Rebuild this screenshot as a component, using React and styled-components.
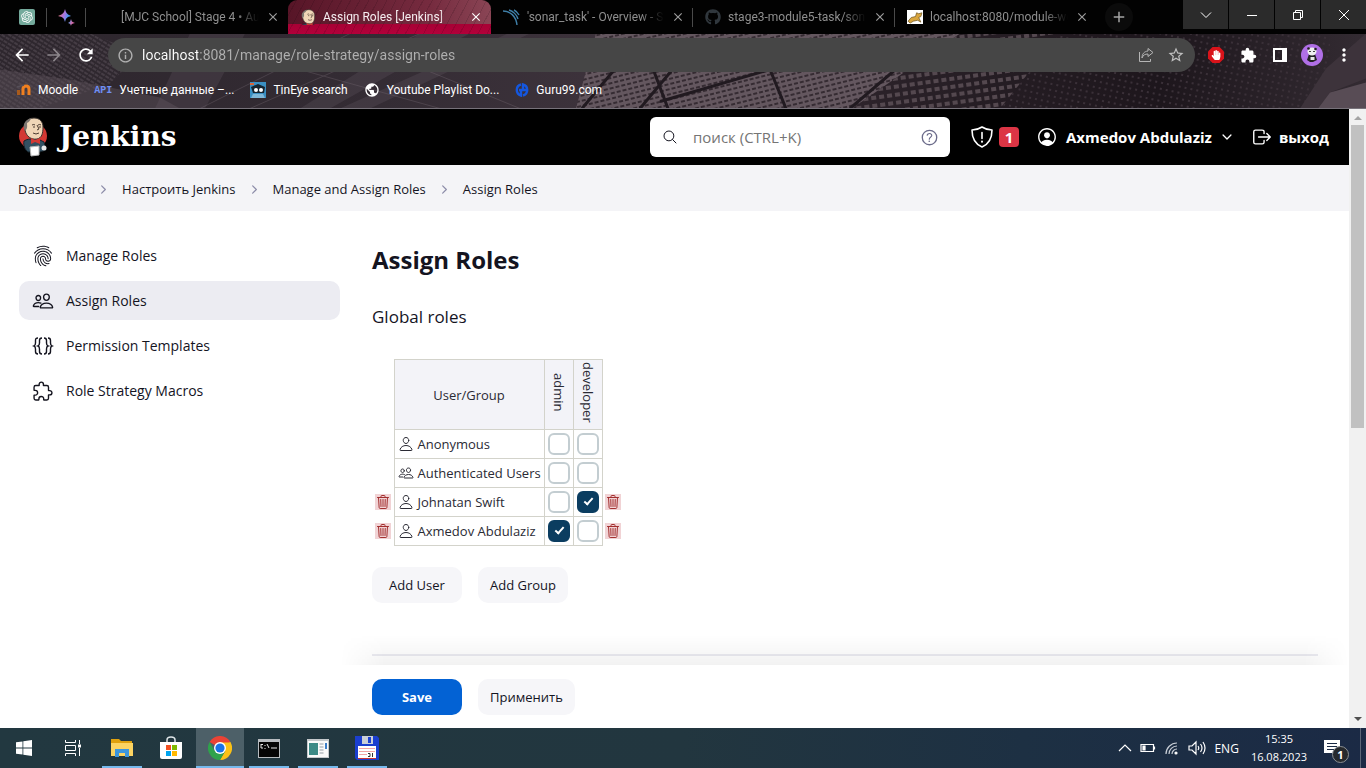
import React from "react";
import styled, { createGlobalStyle, css } from "styled-components";
import {
  IoFingerPrintOutline,
  IoPeopleOutline,
  IoPersonOutline,
  IoTrashOutline,
  IoExtensionPuzzleOutline,
  IoSearchOutline,
  IoHelpCircleOutline,
  IoPersonCircleOutline,
  IoLogOutOutline,
  IoChevronDown,
  IoChevronForward,
} from "react-icons/io5";
import {
  MdArrowBack,
  MdArrowForward,
  MdRefresh,
  MdExtension,
  MdMoreVert,
  MdStarOutline,
  MdClose,
  MdAdd,
  MdInfoOutline,
  MdPublic,
} from "react-icons/md";
import { FaGithub, FaHandPaper } from "react-icons/fa";
import { RiOpenaiFill } from "react-icons/ri";

const GlobalStyle = createGlobalStyle`
  *, *::before, *::after { box-sizing: border-box; }
  body {
    margin: 0;
    color: #14141f;
    background: #fff;
    font-family: "Open Sans", "Noto Sans", sans-serif;
    font-size: 13px;
  }
  button, input { font: inherit; color: inherit; }
  button { border: 0; padding: 0; background: none; cursor: pointer; }
  a { color: inherit; text-decoration: none; }
  svg { display: block; flex: none; }
`;

const Desktop = styled.div`
  display: flex;
  flex-direction: column;
  height: 100vh;
  overflow: hidden;
`;

/* ---------- browser frame ---------- */

const frameFont = css`
  font-family: Roboto, "Open Sans", sans-serif;
`;

const TabStrip = styled.div`
  ${frameFont}
  display: flex;
  height: 34px;
  padding-left: 8px;
  background: #020202;
  flex: none;
`;

const Tab = styled.div`
  position: relative;
  display: flex;
  align-items: center;
  gap: 7px;
  flex: 0 1 202px;
  min-width: 0;
  padding: 0 8px 0 12px;
  border-radius: 9px 9px 0 0;
  color: #8f8f8f;
  font-size: 12px;
  ${(p) =>
    p.$pinned &&
    css`
      flex: 0 0 39px;
      padding: 0 11px;
    `}
  ${(p) =>
    p.$active &&
    css`
      flex-basis: 203px;
      color: #f5eef0;
      background:
        repeating-linear-gradient(118deg, transparent 0 7px, rgba(20, 0, 10, 0.14) 7px 8px),
        linear-gradient(90deg, #571527, #762b3f 70%, #8a4555) 0 0 / 100% 24px no-repeat,
        linear-gradient(#8a0428, #b3003a);
    `}
  ${(p) =>
    p.$divider &&
    css`
      &::after {
        content: "";
        position: absolute;
        right: 0;
        top: 8px;
        width: 1px;
        height: 19px;
        background: #4a4a4a;
      }
    `}
`;

const TabTitle = styled.span`
  flex: 1;
  min-width: 0;
  overflow: hidden;
  white-space: nowrap;
  mask-image: linear-gradient(90deg, #000 calc(100% - 24px), transparent);
`;

const TabClose = styled.button`
  display: flex;
  color: ${(p) => (p.$active ? "#fff" : "#9d9d9d")};
`;

const NewTab = styled.button`
  display: flex;
  align-items: center;
  justify-content: center;
  width: 28px;
  height: 28px;
  margin: 3px 0 0 8px;
  border-radius: 50%;
  color: #a5a5a5;
  background: #0b0b0b;
`;

const WindowButtons = styled.div`
  display: flex;
  gap: 1px;
  margin-left: auto;
`;

const WindowButton = styled.button`
  display: flex;
  align-items: center;
  justify-content: center;
  width: 45px;
  height: 29px;
  color: #fff;
  background: #2b2b2b;
`;

const ChromeBars = styled.div`
  ${frameFont}
  position: relative;
  isolation: isolate;
  flex: none;
  height: 75px;
  border-bottom: 1px solid #77727a;
  background: #282026;
`;

const Artwork = styled.svg`
  position: absolute;
  inset: 0;
  width: 100%;
  height: 100%;
  z-index: -1;
`;

const Toolbar = styled.div`
  display: flex;
  align-items: center;
  gap: 10px;
  padding: 4px 11px 0;
  color: #fff;
`;

const ToolButton = styled.button`
  display: flex;
  align-items: center;
  justify-content: center;
  width: 22px;
  height: 24px;
  color: ${(p) => (p.$dim ? "#8b858a" : "#fff")};
`;

const AddressBox = styled.div`
  display: flex;
  align-items: center;
  gap: 8px;
  flex: 1;
  height: 34px;
  padding: 0 8px 0 9px;
  margin-left: 1px;
  border-radius: 17px;
  color: #b0b0b0;
  background: #464646;
`;

const AddressInput = styled.input`
  flex: 1;
  min-width: 0;
  border: 0;
  padding: 0;
  outline: 0;
  font-size: 14px;
  color: transparent;
  background: linear-gradient(90deg, #fff 56px, #b0b0b0 56px);
  background-clip: text;
`;

const ToolbarEnd = styled.div`
  display: flex;
  align-items: center;
  gap: 10px;
`;

const Bookmarks = styled.nav`
  display: flex;
  align-items: center;
  gap: 16px;
  padding: 8px 16px 0;
  color: #fff;
  font-size: 12px;
`;

const Bookmark = styled.a`
  display: flex;
  align-items: center;
  gap: 7px;
  height: 20px;
  white-space: nowrap;
`;

/* ---------- Jenkins page ---------- */

const Viewport = styled.div`
  display: flex;
  flex: 1;
  min-height: 0;
`;

const Page = styled.div`
  display: flex;
  flex-direction: column;
  flex: 1;
  min-width: 0;
`;

const Scrollbar = styled.div`
  display: flex;
  flex-direction: column;
  align-items: center;
  justify-content: space-between;
  width: 17px;
  padding: 7px 0;
  background: #f1f1f1;
`;

const ScrollThumb = styled.div`
  flex: 0 0 50%;
  width: 13px;
  margin-top: 5px;
  margin-bottom: auto;
  background: #c1c1c1;
`;

const Header = styled.header`
  display: flex;
  align-items: center;
  flex: none;
  height: 56px;
  padding: 0 20px 0 18px;
  color: #fff;
  background: #000;
`;

const Brand = styled.a`
  display: flex;
  align-items: center;
  gap: 11px;
  margin-right: auto;
  font-family: "DejaVu Serif", serif;
  font-weight: 700;
  font-size: 28px;
  line-height: 36px;
`;

const SearchBox = styled.div`
  display: flex;
  align-items: center;
  gap: 15px;
  flex: 0 1 300px;
  height: 40px;
  padding: 0 10px 0 12px;
  border-radius: 6px;
  color: #14141f;
  background: #fff;
`;

const SearchInput = styled.input`
  flex: 1;
  min-width: 0;
  border: 0;
  padding: 0;
  outline: 0;
  font-size: 15px;
  background: none;
  &::placeholder { color: #757575; opacity: 1; }
`;

const HelpLink = styled.a`
  display: flex;
  color: #6b6b8a;
`;

const HeaderLink = styled.a`
  display: flex;
  align-items: center;
  gap: ${(p) => p.$inner || 6}px;
  margin-left: ${(p) => p.$gap}px;
  font-size: 15px;
  font-weight: 700;
  white-space: nowrap;
`;

const AlertCount = styled.span`
  display: flex;
  align-items: center;
  justify-content: center;
  width: 20px;
  height: 20px;
  border-radius: 4px;
  background: #dc3545;
`;

const Breadcrumbs = styled.nav`
  display: flex;
  align-items: center;
  gap: 12px;
  flex: none;
  height: 46px;
  padding: 2px 18px 0;
  background: #f4f4f7;
  white-space: nowrap;
  svg { color: #8b8ba8; }
`;

const Columns = styled.div`
  display: flex;
  flex: 1;
  min-height: 0;
`;

const Sidebar = styled.nav`
  display: flex;
  flex-direction: column;
  gap: 6px;
  flex: 0 0 340px;
  padding: 25px 0 0 19px;
`;

const SidebarLink = styled.a`
  display: flex;
  align-items: center;
  gap: 12px;
  height: 39px;
  padding: 0 13px;
  border-radius: 10px;
  font-size: 14px;
  background: ${(p) => (p.$active ? "#ececf2" : "transparent")};
`;

const Main = styled.main`
  display: flex;
  flex-direction: column;
  flex: 1;
  min-width: 0;
`;

const Content = styled.div`
  flex: 1;
  min-height: 0;
  overflow: hidden;
  padding: 33px 31px 0 32px;
`;

const Title = styled.h1`
  margin: 0;
  font-size: 24px;
  line-height: 32px;
  font-weight: 700;
`;

const Subtitle = styled.h2`
  margin: 28px 0 30px;
  font-size: 17px;
  line-height: 25px;
  font-weight: 400;
`;

const RoleTable = styled.table`
  border-collapse: collapse;
  color: #2a2a34;
  font-size: 13px;
`;

const cell = css`
  height: 29px;
  padding: 0;
  border: 1px solid #d3d3cb;
  font-weight: 400;
`;

const HeadCell = styled.th`
  ${cell}
  height: 70px;
  background: #f3f3f8;
`;

const VerticalText = styled.span`
  display: inline-block;
  writing-mode: vertical-rl;
  line-height: 20px;
`;

const NameCell = styled.th`
  ${cell}
  width: 150px;
  text-align: left;
  white-space: nowrap;
`;

const NameLine = styled.span`
  display: flex;
  align-items: center;
  gap: 4px;
  padding-left: 3px;
`;

const TickCell = styled.td`
  ${cell}
  width: 29px;
`;

const Tick = styled.input`
  display: block;
  position: relative;
  width: 22px;
  height: 22px;
  margin: 0 auto;
  appearance: none;
  border: 2px solid #c3cdd1;
  border-radius: 6px;
  background: #fff;
  &:checked {
    border-color: #0b3d60;
    background: #0b3d60;
  }
  &:checked::after {
    content: "";
    position: absolute;
    left: 7px;
    top: 3px;
    width: 5px;
    height: 9px;
    border: solid #fff;
    border-width: 0 2px 2px 0;
    transform: rotate(42deg);
  }
`;

const ActionCell = styled.td`
  width: 22px;
  padding: 0;
`;

const DeleteButton = styled.button`
  display: flex;
  align-items: center;
  justify-content: center;
  width: 16px;
  height: 16px;
  margin: 0 auto;
  color: #a33030;
  background: #f1d3d5;
`;

const ButtonRow = styled.div`
  display: flex;
  gap: 16px;
  margin-top: ${(p) => p.$top || 0}px;
`;

const Button = styled.button`
  min-width: 90px;
  height: 36px;
  padding: 0 12px;
  border-radius: 10px;
  font-size: 13px;
  font-weight: ${(p) => (p.$primary ? 700 : 500)};
  color: ${(p) => (p.$primary ? "#fff" : "#14141f")};
  background: ${(p) => (p.$primary ? "#0362d4" : "#f6f6f9")};
`;

const Divider = styled.hr`
  height: 2px;
  margin: 51px 0 0;
  border: 0;
  background: #ebebf1;
`;

const SaveBar = styled.div`
  position: relative;
  flex: none;
  padding: 14px 32px 13px;
  background: #fff;
  &::before {
    content: "";
    position: absolute;
    left: 0;
    right: 0;
    bottom: 100%;
    height: 30px;
    background: linear-gradient(transparent, rgba(0, 0, 0, 0.05));
    mask-image: linear-gradient(90deg, transparent, #000 45px calc(100% - 45px), transparent);
  }
`;

/* ---------- Windows taskbar ---------- */

const Taskbar = styled.footer`
  display: flex;
  align-items: center;
  flex: none;
  height: 40px;
  padding-right: 11px;
  color: #fff;
  background: linear-gradient(90deg, #223840, #22363f 50%, #1d3043 75%, #1b2a45);
  border-right: 1px solid #1b2a45;
  box-shadow: inset -4px 0 #1b2a45, inset -5px 0 #5b6678;
  font-size: 12px;
`;

const TaskApps = styled.div`
  display: flex;
  gap: 1px;
  margin-right: auto;
`;

const TaskButton = styled.button`
  position: relative;
  display: flex;
  align-items: center;
  justify-content: center;
  width: 48px;
  height: 40px;
  background: ${(p) => (p.$active ? "#4d6068" : "none")};
  &::after {
    content: "";
    position: absolute;
    left: ${(p) => (p.$active ? 0 : 4)}px;
    right: ${(p) => (p.$active ? 0 : 4)}px;
    bottom: 0;
    height: 2px;
    background: ${(p) => (p.$open ? "#76b9ed" : "none")};
  }
`;

const Tray = styled.div`
  display: flex;
  align-items: center;
  gap: 8px;
  padding-right: 4px;
`;

const Clock = styled.time`
  display: flex;
  flex-direction: column;
  align-items: center;
  margin: 0 9px 0 4px;
  font-size: 11px;
  line-height: 18px;
`;

const Notifications = styled.button`
  position: relative;
  display: flex;
  width: 26px;
  height: 24px;
  padding-top: 4px;
`;

const NoteCount = styled.span`
  position: absolute;
  right: 1px;
  bottom: -3px;
  width: 17px;
  height: 17px;
  border: 1px solid #8b8f93;
  border-radius: 50%;
  background: #26292d;
  font-size: 11px;
  line-height: 15px;
  font-weight: 700;
  text-align: center;
`;

/* ---------- drawings ---------- */

const ThemeArt = () => (
  <Artwork viewBox="0 34 1366 75" preserveAspectRatio="xMidYMid slice" aria-hidden="true">
    <defs>
      <linearGradient id="base" x1="0" x2="1">
        <stop offset="0" stopColor="#2d262d" />
        <stop offset="0.28" stopColor="#342c34" />
        <stop offset="0.5" stopColor="#40353e" />
        <stop offset="0.65" stopColor="#2a2128" />
        <stop offset="0.85" stopColor="#1d161c" />
        <stop offset="1" stopColor="#332b32" />
      </linearGradient>
      <pattern id="weave" width="6" height="5" patternUnits="userSpaceOnUse" patternTransform="rotate(-14)">
        <rect width="6" height="5" fill="#64575f" />
        <path d="M0 4h4" stroke="#352b32" strokeWidth="2" />
      </pattern>
      <pattern id="stripe" width="5" height="4" patternUnits="userSpaceOnUse" patternTransform="rotate(32)">
        <path d="M0 1h4" stroke="#796d78" strokeWidth="1" />
      </pattern>
      <pattern id="blocks" width="8" height="8" patternUnits="userSpaceOnUse" patternTransform="rotate(-8)">
        <path d="M1 1h5v4H1z" fill="#54484f" />
      </pattern>
      <pattern id="dots" width="6" height="6" patternUnits="userSpaceOnUse" patternTransform="rotate(12)">
        <path d="M1 1h2v2H1z" fill="#3a3038" />
      </pattern>
    </defs>
    <rect y="34" width="1366" height="75" fill="url(#base)" />
    <path d="M0 34h90l50 20-30 30-70 25H0z" fill="url(#stripe)" opacity="0.6" />
    <path d="M0 70l70 10 90 18 20 11H0z" fill="#5d525c" opacity="0.45" />
    <path d="M190 34h55l-40 75h-50z" fill="#675b66" opacity="0.25" />
    <path d="M330 109l80-45 60-30h-50l-120 75zM370 109l160-75h-22L340 109z" fill="#615560" opacity="0.3" />
    <path d="M200 109L350 34M250 109L420 34M300 70l140 39M400 60l120 49" stroke="#766a73" opacity="0.35" />
    <path d="M596 34h364L852 109H576z" fill="url(#weave)" />
    <path d="M582 109l40-48M654 72l14 37M640 109l50-60M660 102l110-32 16 39M850 109l70-60" stroke="#211a20" strokeWidth="3" fill="none" />
    <path d="M852 109L960 34h100l-60 75z" fill="url(#blocks)" />
    <path d="M1000 109l60-75h270v75z" fill="url(#dots)" />
    <path d="M1300 109l26-40 40-35v45l-36 14-12 16z" fill="#3d333b" />
    <path d="M1318 109l12-16 36-10v26z" fill="#584c55" />
  </Artwork>
);

const Butler = ({ size, full }) => (
  <svg width={full ? 30 : size} height={full ? 40 : size} viewBox={full ? "0 0 30 40" : "3 0 24 24"} aria-hidden="true">
    {full && <ellipse cx="15" cy="19" rx="14" ry="13" fill="#d33833" />}
    <path d="M6 24c3-2 6-2 8-2h6l6 3 2 8-6 2H10c-3-2-5-7-4-11z" fill="#335061" stroke="#16232b" />
    <path d="M7 13C5 7 9 1 16 1c6 0 9 4 9 9 0 6-1 11-6 12-6 1-11-3-12-9z" fill="#f0d6b7" stroke="#3b3430" />
    <path d="M7 14C4 9 6 3 13 1c-1 3-2 4-4 5 0 3 1 5-2 8z" fill="#7d7670" />
    <path d="M14 8q2-1 3 0m3 0q2-1 3 0M19 8l2 4-2 1M15 16q3 2 6 0M15 10h2m4 0h2" stroke="#4b3a30" fill="none" />
    <path d="M13 21l4 2 5-2v6l-5-2-4 2z" fill="#d33833" />
    {full && <path d="M12 30l9-1v9l-8 1z" fill="#fff" stroke="#b9b9b9" />}
    {full && <circle cx="26" cy="31" r="2.500" fill="#e8e8e8" />}
  </svg>
);

const Sparkles = () => (
  <svg width="17" height="17" viewBox="0 0 17 17" aria-hidden="true">
    <defs>
      <linearGradient id="spark" x1="0" y1="0" x2="1" y2="0.3">
        <stop stopColor="#f0725a" />
        <stop offset="0.45" stopColor="#a478e8" />
        <stop offset="0.7" stopColor="#3a9dec" />
        <stop offset="1" stopColor="#d86aa8" />
      </linearGradient>
    </defs>
    <path d="M7 0c1 4 2 5 6 7-4 1-5 2-6 6-1-4-2-5-7-6 5-2 6-3 7-7zM13 10c.5 2 1 3 4 4-3 .5-3.500 1-4 3-.5-2-1-2.500-3-3 2-1 2.500-2 3-4z" fill="url(#spark)" />
  </svg>
);

const SonarIcon = () => (
  <svg width="17" height="16" viewBox="0 0 17 16" fill="none" stroke="#3f7fa8" strokeWidth="1.400" aria-hidden="true">
    <path d="M0 2c7 0 13 5 14 14M6 1c4 1 8 5 9 9M11 1c2 1 4 3 5 5" />
  </svg>
);

const CatIcon = () => (
  <svg width="16" height="14" viewBox="0 0 15 15" preserveAspectRatio="none" aria-hidden="true">
    <path d="M0 0h15v15H0z" fill="#fff" />
    <path d="M1 12l3-4 4-1 1-4 2 1 3-1-1 4-2 1 2 5-3-2-4 1-3 2z" fill="#d9a63f" stroke="#6a5120" strokeWidth="0.700" />
  </svg>
);

const GptIcon = styled.span`
  display: flex;
  padding: 1px;
  border-radius: 2px;
  color: #fff;
  background: #74aa9c;
`;

const Moodle = () => (
  <svg width="15" height="12" viewBox="0 0 15 12" fill="none" stroke="#f08020" strokeWidth="3" aria-hidden="true">
    <path d="M7 11V5q0-3 3-3t3 3v6" />
    <path d="M2.500 6v5" stroke="#a95b1c" />
    <path d="M1 3l7-2" stroke="#565059" strokeWidth="1.500" />
  </svg>
);

const ApiMark = styled.span`
  color: #6f8ff5;
  font: 700 10px "Liberation Mono", monospace;
`;

const Robot = () => (
  <svg width="16" height="16" viewBox="0 0 16 16" aria-hidden="true">
    <path d="M0 0h16v16H0z" fill="#3a8fc2" />
    <path d="M1 5l7-3 7 3-1 6H3z" fill="#16242f" />
    <path d="M3 12h10l2 4H1z" fill="#7fb8d8" />
    <circle cx="6" cy="8" r="2" fill="#fff" />
    <circle cx="11" cy="8" r="2" fill="#fff" />
    <path d="M0 1h4v2H0z" fill="#d9643a" />
  </svg>
);

const GuruIcon = () => (
  <svg width="14" height="14" viewBox="0 0 14 14" fill="none" stroke="#1457e0" strokeWidth="2.400" aria-hidden="true">
    <path d="M6 1.500A5.700 5.700 0 0 0 6 12.500V7H4M8 12.500A5.700 5.700 0 0 0 8 1.500V7h3" />
  </svg>
);

const ShareIcon = () => (
  <svg width="16" height="16" viewBox="0 0 16 16" fill="none" stroke="#b5b5b5" aria-hidden="true">
    <path d="M1.500 5v9.500h11V12M10 1.500l5 4-5 4V7C7 7 5 8 4 11c0-4 2-6.500 6-7z" />
  </svg>
);

const PanelIcon = () => (
  <svg width="14" height="14" viewBox="0 0 14 14" aria-hidden="true">
    <path d="M1 1h12v12H1z" fill="none" stroke="#fff" strokeWidth="2" />
    <path d="M9 1h4v12H9z" fill="#fff" />
  </svg>
);

const BlockIcon = () => (
  <svg width="18" height="18" viewBox="0 0 18 18" aria-hidden="true">
    <path d="M5.500 1h7L17 5.500v7L12.500 17h-7L1 12.500v-7z" fill="#d9131a" />
    <g transform="translate(4 4)"><FaHandPaper size={10} color="#fff" /></g>
  </svg>
);

const Panda = () => (
  <svg width="22" height="22" viewBox="0 0 22 22" aria-hidden="true">
    <circle cx="11" cy="11" r="11" fill="#b06fe6" />
    <path d="M8 10h6l2 6-4 2H9l-3-2z" fill="#222" />
    <ellipse cx="11" cy="7.500" rx="4.500" ry="4" fill="#eee" />
    <circle cx="7.500" cy="4.500" r="1.300" fill="#222" />
    <circle cx="14.500" cy="5" r="1.300" fill="#222" />
    <path d="M8 7h2v1H8zM12 7h2v1h-2z" fill="#444" />
    <path d="M9.500 13h4v3h-4z" fill="#e8e8e8" />
  </svg>
);

const WinGlyph = ({ d }) => (
  <svg width="12" height="12" viewBox="0 0 12 12" fill="none" stroke="#fff" aria-hidden="true">
    <path d={d} />
  </svg>
);

const ShieldIcon = () => (
  <svg width="22" height="22" viewBox="0 0 22 22" fill="none" stroke="#fff" strokeWidth="1.600" strokeLinecap="round" strokeLinejoin="round" aria-hidden="true">
    <path d="M11 1C8 3 4.500 4 1 4c0 8 3 14 10 17 7-3 10-9 10-17-3.500 0-7-1-10-3zM11 6.500v6" />
    <path d="M11 15.500v.2" strokeWidth="2" />
  </svg>
);

const BracesIcon = () => (
  <svg width="22" height="20" viewBox="-1 0 22 20" fill="none" stroke="#14141f" strokeWidth="1.400" aria-hidden="true">
    <path d="M5 2Q2.500 2 2.500 4.500V7Q2.500 9.500 1 10q1.500.5 1.500 3v2.500Q2.500 18 5 18" />
    <path d="M9 2Q6.500 2 6.500 4.500V7Q6.500 9.500 5 10q1.500.5 1.500 3v2.500Q6.500 18 9 18" />
    <path d="M11 2q2.500 0 2.500 2.500V7q0 2.500 1.500 3-1.500.5-1.500 3v2.500Q13.500 18 11 18" />
    <path d="M15 2q2.500 0 2.500 2.500V7q0 2.500 1.500 3-1.500.5-1.500 3v2.500Q17.500 18 15 18" />
  </svg>
);

const Arrow = ({ down }) => (
  <svg width="8" height="4" viewBox="0 0 8 4" aria-hidden="true">
    <path d={down ? "M0 0h8L4 4z" : "M0 4h8L4 0z"} fill={down ? "#505050" : "#a3a3a3"} />
  </svg>
);

const WindowsLogo = () => (
  <svg width="16" height="16" viewBox="0 0 16 16" fill="#fff" aria-hidden="true">
    <path d="M0 2.300L6.500 1.400v6.200H0zM7.300 1.300L16 0v7.600H7.300zM0 8.400h6.500v6.200L0 13.700zM7.300 8.400H16V16l-8.700-1.300z" />
  </svg>
);

const TaskView = () => (
  <svg width="16" height="16" viewBox="0 0 16 16" fill="none" stroke="#fff" aria-hidden="true">
    <path d="M.5 0v2.500h10V0M.5 5.500h10v5H.5zM.5 16v-2.500h10V16M14.500 0v4M14.500 8v8" />
    <path d="M13 4.500h3v3h-3z" fill="#fff" stroke="none" />
  </svg>
);

const Explorer = () => (
  <svg width="22" height="18" viewBox="0 0 22 18" aria-hidden="true">
    <path d="M0 0h8l2 2h11v6H0z" fill="#e0a10e" />
    <path d="M0 4h22v13H0z" fill="#fcd462" />
    <path d="M4 10h14v8h-4v-4H8v4H4z" fill="#3d96dc" />
  </svg>
);

const Store = () => (
  <svg width="24" height="24" viewBox="0 0 24 24" aria-hidden="true">
    <path d="M8 7V4q0-3 4-3t4 3v3" fill="none" stroke="#dfe5e8" strokeWidth="1.500" />
    <path d="M1 6h22v15q0 2-2 2H3q-2 0-2-2z" fill="#fff" />
    <path d="M7 9h5v5H7z" fill="#f25022" />
    <path d="M13 9h5v5h-5z" fill="#7fba00" />
    <path d="M7 15h5v5H7z" fill="#00a4ef" />
    <path d="M13 15h5v5h-5z" fill="#ffb900" />
  </svg>
);

const Chrome = () => (
  <svg width="24" height="24" viewBox="0 0 24 24" aria-hidden="true">
    <path d="M12 12L1.600 6a12 12 0 0 1 20.800 0z" fill="#ea4335" />
    <path d="M12 12L22.400 6A12 12 0 0 1 12 24l5.200-9z" fill="#fbc116" />
    <path d="M12 12l5.200 3L12 24A12 12 0 0 1 1.600 6l5.200 9z" fill="#2fa24c" />
    <path d="M12 6.500h10.600L17 15z" fill="#fbc116" />
    <circle cx="12" cy="12" r="6" fill="#fff" />
    <circle cx="12" cy="12" r="4.600" fill="#1a73e8" />
  </svg>
);

const Console = () => (
  <svg width="22" height="19" viewBox="0 0 22 19" aria-hidden="true">
    <path d="M0 0h22v19H0z" fill="#b8bcc0" />
    <path d="M1 3h20v15H1z" fill="#050505" />
    <path d="M3 5.500h2M3 5v4h2M7 6v1m0 2v1M9 5l2 4M13 9h6" stroke="#e8e8e8" fill="none" />
  </svg>
);

const AppWindow = () => (
  <svg width="22" height="19" viewBox="0 0 22 19" aria-hidden="true">
    <path d="M0 0h22v19H0z" fill="#c5c9cc" />
    <path d="M1 2h20v16H1z" fill="#fafafa" />
    <path d="M2 4h9v12H2z" fill="#3c8a86" />
    <path d="M12.500 5h4M12.500 8h4M12.500 11h4M12.500 14h4" stroke="#c8ccd0" strokeWidth="2" />
    <path d="M19 4v6" stroke="#3d7fc8" strokeWidth="2" />
  </svg>
);

const Floppy = () => (
  <svg width="24" height="24" viewBox="0 0 24 24" aria-hidden="true">
    <path d="M0 0h22l2 2v22H2l-2-2z" fill="#1b3fcf" />
    <path d="M7 0h11v8H7z" fill="#c9ced6" />
    <path d="M13 1h3v6h-3z" fill="#1b3fcf" />
    <path d="M3 10h18v12H3z" fill="#fff" />
    <path d="M4 12.500h16M4 15.500h16M4 18.500h8" stroke="#f0a5a5" />
    <path d="M3 22h18v1H3z" fill="#c33" />
    <path d="M13 17.500h2v3h-2M17.500 17v4" stroke="#333" fill="none" />
  </svg>
);

const TrayGlyph = ({ w = 16, children }) => (
  <svg width={w} height="16" viewBox={`0 0 ${w} 16`} fill="none" stroke="#fff" strokeWidth="1.200" aria-hidden="true">
    {children}
  </svg>
);

const NoteIcon = () => (
  <svg width="17" height="17" viewBox="0 0 17 17" aria-hidden="true">
    <path d="M0 0h16v13h-4v4l-4-4H0z" fill="#fff" />
    <path d="M3 3.500h10M3 6.500h10M3 9.500h7" stroke="#1b2a45" />
  </svg>
);

/* ---------- data ---------- */

const tabs = [
  { id: "gpt", pinned: true, divider: true, label: "ChatGPT", icon: <GptIcon><RiOpenaiFill size={14} /></GptIcon> },
  { id: "spark", pinned: true, divider: true, label: "Sparkles", icon: <Sparkles /> },
  { id: "mjc", title: "[MJC School] Stage 4 • Au", icon: <svg width="16" height="16" aria-hidden="true" /> },
  { id: "jenkins", title: "Assign Roles [Jenkins]", icon: <Butler size={16} />, active: true },
  { id: "sonar", title: "'sonar_task' - Overview - S", icon: <SonarIcon />, divider: true },
  { id: "github", title: "stage3-module5-task/son", icon: <FaGithub size={16} color="#30373d" />, divider: true },
  { id: "tomcat", title: "localhost:8080/module-we", icon: <CatIcon /> },
];

const bookmarks = [
  ["Moodle", <Moodle />],
  ["Учетные данные –...", <ApiMark aria-hidden="true">API</ApiMark>],
  ["TinEye search", <Robot />],
  ["Youtube Playlist Do...", <MdPublic size={16} />],
  ["Guru99.com", <GuruIcon />],
];

const crumbs = ["Dashboard", "Настроить Jenkins", "Manage and Assign Roles", "Assign Roles"];

const tasks = [
  ["Manage Roles", <IoFingerPrintOutline size={22} />],
  ["Assign Roles", <IoPeopleOutline size={22} />],
  ["Permission Templates", <BracesIcon />],
  ["Role Strategy Macros", <IoExtensionPuzzleOutline size={22} />],
];

const roles = ["admin", "developer"];

const users = [
  { name: "Anonymous", granted: [] },
  { name: "Authenticated Users", group: true, granted: [] },
  { name: "Johnatan Swift", removable: true, granted: ["developer"] },
  { name: "Axmedov Abdulaziz", removable: true, granted: ["admin"] },
];

const apps = [
  { name: "Start", icon: <WindowsLogo /> },
  { name: "Task View", icon: <TaskView /> },
  { name: "File Explorer", icon: <Explorer />, open: true },
  { name: "Microsoft Store", icon: <Store /> },
  { name: "Google Chrome", icon: <Chrome />, open: true, active: true },
  { name: "Command Prompt", icon: <Console />, open: true },
  { name: "Application", icon: <AppWindow />, open: true },
  { name: "Total Commander", icon: <Floppy />, open: true },
];

/* ---------- sections ---------- */

const DeleteAction = ({ user }) => (
  <ActionCell>
    {user.removable && (
      <DeleteButton type="button" aria-label={`Remove ${user.name}`}>
        <IoTrashOutline size={16} />
      </DeleteButton>
    )}
  </ActionCell>
);

const GlobalRoles = () => (
  <RoleTable>
    <thead>
      <tr>
        <ActionCell />
        <HeadCell scope="col">User/Group</HeadCell>
        {roles.map((role) => (
          <HeadCell key={role} scope="col">
            <VerticalText>{role}</VerticalText>
          </HeadCell>
        ))}
        <ActionCell />
      </tr>
    </thead>
    <tbody>
      {users.map((user) => (
        <tr key={user.name}>
          <DeleteAction user={user} />
          <NameCell scope="row">
            <NameLine>
              {user.group ? <IoPeopleOutline size={16} /> : <IoPersonOutline size={16} />}
              {user.name}
            </NameLine>
          </NameCell>
          {roles.map((role) => (
            <TickCell key={role}>
              <Tick type="checkbox" aria-label={`${role} for ${user.name}`} defaultChecked={user.granted.includes(role)} />
            </TickCell>
          ))}
          <DeleteAction user={user} />
        </tr>
      ))}
    </tbody>
  </RoleTable>
);

const BrowserFrame = () => (
  <>
    <TabStrip>
      {tabs.map((t) => (
        <Tab key={t.id} $pinned={t.pinned} $active={t.active} $divider={t.divider} aria-label={t.label}>
          {t.icon}
          {t.title && <TabTitle>{t.title}</TabTitle>}
          {t.title && (
            <TabClose type="button" aria-label="Close tab" $active={t.active}>
              <MdClose size={14} />
            </TabClose>
          )}
        </Tab>
      ))}
      <NewTab type="button" aria-label="New tab"><MdAdd size={18} /></NewTab>
      <WindowButtons>
        <WindowButton type="button" aria-label="Search tabs"><WinGlyph d="M1 3.500l5 5 5-5" /></WindowButton>
        <WindowButton type="button" aria-label="Minimize"><WinGlyph d="M1 6.500h10" /></WindowButton>
        <WindowButton type="button" aria-label="Restore"><WinGlyph d="M1.500 3.500h7v7h-7zM3.500 3.500v-2h7v7h-2" /></WindowButton>
        <WindowButton type="button" aria-label="Close"><WinGlyph d="M1 1l10 10M11 1L1 11" /></WindowButton>
      </WindowButtons>
    </TabStrip>
    <ChromeBars>
      <ThemeArt />
      <Toolbar>
        <ToolButton type="button" aria-label="Back"><MdArrowBack size={20} /></ToolButton>
        <ToolButton type="button" aria-label="Forward" $dim><MdArrowForward size={20} /></ToolButton>
        <ToolButton type="button" aria-label="Reload"><MdRefresh size={20} /></ToolButton>
        <AddressBox>
          <MdInfoOutline size={17} />
          <AddressInput type="text" aria-label="Address" defaultValue="localhost:8081/manage/role-strategy/assign-roles" />
          <ToolButton type="button" aria-label="Share"><ShareIcon /></ToolButton>
          <ToolButton type="button" aria-label="Bookmark this page"><MdStarOutline size={18} color="#c0c0c0" /></ToolButton>
        </AddressBox>
        <ToolbarEnd>
          <ToolButton type="button" aria-label="Ad blocker"><BlockIcon /></ToolButton>
          <ToolButton type="button" aria-label="Extensions"><MdExtension size={17} /></ToolButton>
          <ToolButton type="button" aria-label="Side panel"><PanelIcon /></ToolButton>
          <ToolButton type="button" aria-label="Profile"><Panda /></ToolButton>
          <ToolButton type="button" aria-label="Menu"><MdMoreVert size={20} /></ToolButton>
        </ToolbarEnd>
      </Toolbar>
      <Bookmarks aria-label="Bookmarks">
        {bookmarks.map(([name, icon]) => (
          <Bookmark key={name} href="#">
            {icon}
            {name}
          </Bookmark>
        ))}
      </Bookmarks>
    </ChromeBars>
  </>
);

const JenkinsHeader = () => (
  <Header>
    <Brand href="#"><Butler full />Jenkins</Brand>
    <SearchBox>
      <IoSearchOutline size={16} />
      <SearchInput type="search" aria-label="поиск" placeholder="поиск (CTRL+K)" />
      <HelpLink href="#" aria-label="Help"><IoHelpCircleOutline size={21} /></HelpLink>
    </SearchBox>
    <HeaderLink href="#" $gap={21}><ShieldIcon /><AlertCount>1</AlertCount></HeaderLink>
    <HeaderLink href="#" $gap={17} $inner={8}>
      <IoPersonCircleOutline size={22} />
      Axmedov Abdulaziz
      <IoChevronDown size={14} />
    </HeaderLink>
    <HeaderLink href="#" $gap={17}><IoLogOutOutline size={22} />выход</HeaderLink>
  </Header>
);

const WindowsTaskbar = () => (
  <Taskbar>
    <TaskApps>
      {apps.map((a) => (
        <TaskButton key={a.name} type="button" aria-label={a.name} $open={a.open} $active={a.active}>
          {a.icon}
        </TaskButton>
      ))}
    </TaskApps>
    <Tray>
      <TrayGlyph w={14}><path d="M1 11l6-6 6 6" /></TrayGlyph>
      <TrayGlyph><path d="M1 4.500h12.500v7H1zM14.500 6.500v3" /><path d="M3 6h2v4H3z" fill="#fff" /></TrayGlyph>
      <TrayGlyph><path d="M2 14A11 11 0 0 1 13 3M5 14a8 8 0 0 1 8-8M8 14a5 5 0 0 1 5-5" stroke="#c8ced6" /><circle cx="12" cy="13" r="1" fill="#fff" /></TrayGlyph>
      <TrayGlyph w={18}><path d="M1 6h3l4-4v12l-4-4H1zM10 6q1.500 2 0 4M12.500 4q3 4 0 8M15 2q4 6 0 12" /></TrayGlyph>
      <span>ENG</span>
      <Clock><span>15:35</span><span>16.08.2023</span></Clock>
      <Notifications type="button" aria-label="Notifications">
        <NoteIcon />
        <NoteCount>1</NoteCount>
      </Notifications>
    </Tray>
  </Taskbar>
);

export default function App() {
  return (
    <Desktop>
      <GlobalStyle />
      <BrowserFrame />
      <Viewport>
        <Page>
          <JenkinsHeader />
          <Breadcrumbs aria-label="Breadcrumbs">
            {crumbs.map((c, i) => (
              <React.Fragment key={c}>
                {i > 0 && <IoChevronForward size={13} />}
                <a href="#">{c}</a>
              </React.Fragment>
            ))}
          </Breadcrumbs>
          <Columns>
            <Sidebar>
              {tasks.map(([name, icon]) => (
                <SidebarLink key={name} href="#" $active={name === "Assign Roles"}>
                  {icon}
                  {name}
                </SidebarLink>
              ))}
            </Sidebar>
            <Main>
              <Content>
                <Title>Assign Roles</Title>
                <Subtitle>Global roles</Subtitle>
                <GlobalRoles />
                <ButtonRow $top={21}>
                  <Button type="button">Add User</Button>
                  <Button type="button">Add Group</Button>
                </ButtonRow>
                <Divider />
              </Content>
              <SaveBar>
                <ButtonRow>
                  <Button type="submit" $primary>Save</Button>
                  <Button type="button">Применить</Button>
                </ButtonRow>
              </SaveBar>
            </Main>
          </Columns>
        </Page>
        <Scrollbar aria-hidden="true">
          <Arrow />
          <ScrollThumb />
          <Arrow down />
        </Scrollbar>
      </Viewport>
      <WindowsTaskbar />
    </Desktop>
  );
}
